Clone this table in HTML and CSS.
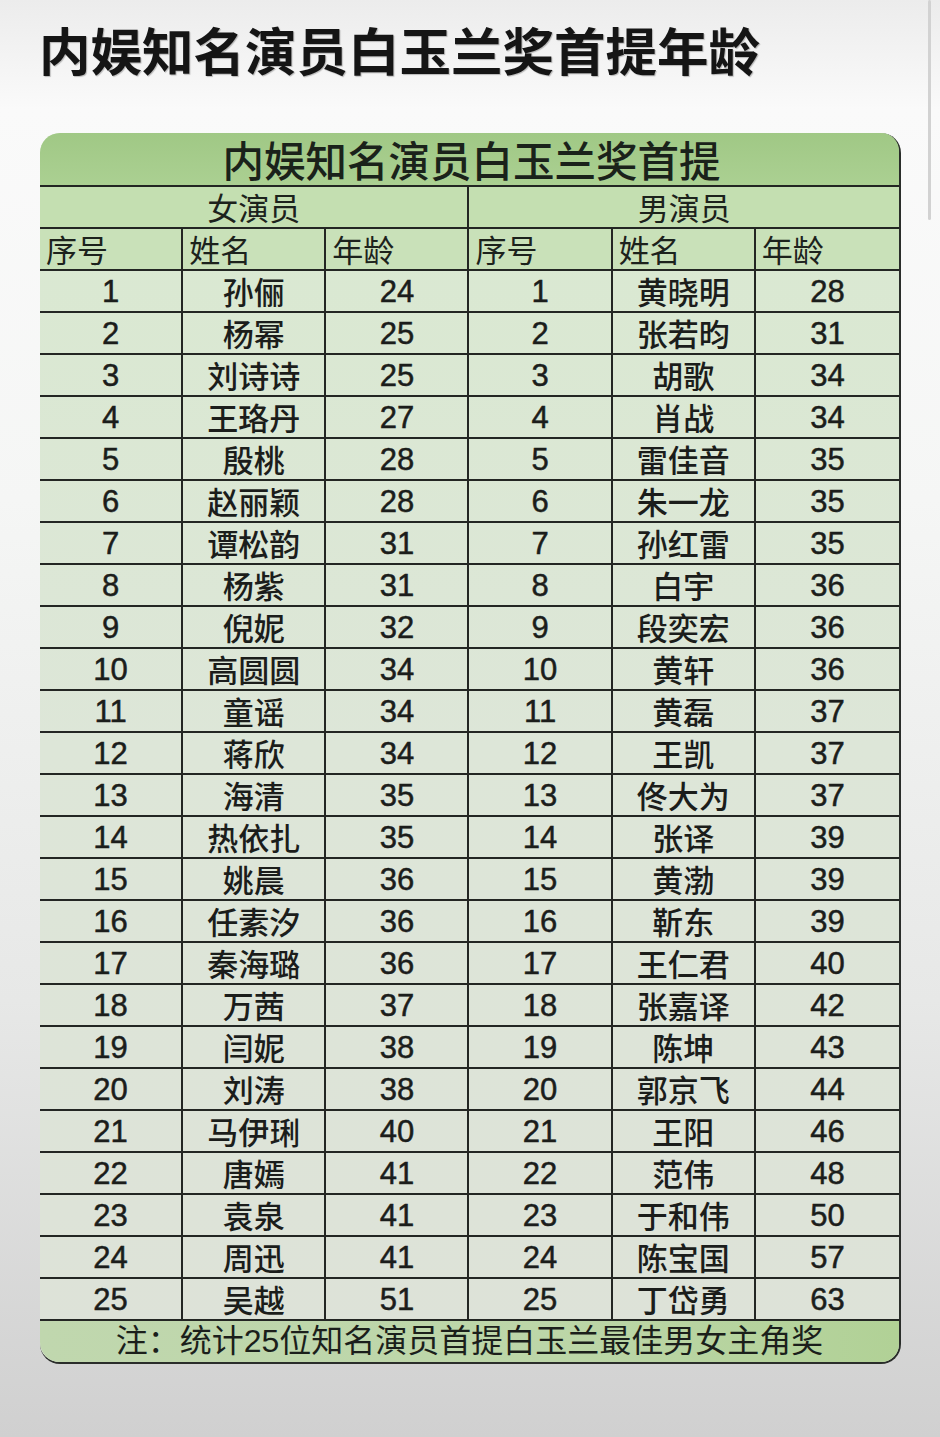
FILE: index.html
```html
<!DOCTYPE html>
<html lang="zh-CN">
<head>
<meta charset="utf-8">
<title>内娱知名演员白玉兰奖首提年龄</title>
<link rel="stylesheet" href="styles.css">
</head>
<body>
<div class="page">
  <h1 class="headline">内娱知名演员白玉兰奖首提年龄</h1>
  <div class="sheet">
    <table class="grid">
      <colgroup>
        <col class="c"><col class="c"><col class="c"><col class="c"><col class="c"><col class="c">
      </colgroup>
      <thead>
        <tr class="r-title"><th colspan="6">内娱知名演员白玉兰奖首提</th></tr>
        <tr class="r-group"><th colspan="3" class="vl">女演员</th><th colspan="3">男演员</th></tr>
        <tr class="r-head"><th class="vl">序号</th><th class="vl">姓名</th><th class="vl">年龄</th><th class="vl">序号</th><th class="vl">姓名</th><th>年龄</th></tr>
      </thead>
      <tbody id="rows">
<tr><td>1</td><td class="nm">孙俪</td><td>24</td><td>1</td><td class="nm">黄晓明</td><td>28</td></tr>
<tr><td>2</td><td class="nm">杨幂</td><td>25</td><td>2</td><td class="nm">张若昀</td><td>31</td></tr>
<tr><td>3</td><td class="nm">刘诗诗</td><td>25</td><td>3</td><td class="nm">胡歌</td><td>34</td></tr>
<tr><td>4</td><td class="nm">王珞丹</td><td>27</td><td>4</td><td class="nm">肖战</td><td>34</td></tr>
<tr><td>5</td><td class="nm">殷桃</td><td>28</td><td>5</td><td class="nm">雷佳音</td><td>35</td></tr>
<tr><td>6</td><td class="nm">赵丽颖</td><td>28</td><td>6</td><td class="nm">朱一龙</td><td>35</td></tr>
<tr><td>7</td><td class="nm">谭松韵</td><td>31</td><td>7</td><td class="nm">孙红雷</td><td>35</td></tr>
<tr><td>8</td><td class="nm">杨紫</td><td>31</td><td>8</td><td class="nm">白宇</td><td>36</td></tr>
<tr><td>9</td><td class="nm">倪妮</td><td>32</td><td>9</td><td class="nm">段奕宏</td><td>36</td></tr>
<tr><td>10</td><td class="nm">高圆圆</td><td>34</td><td>10</td><td class="nm">黄轩</td><td>36</td></tr>
<tr><td>11</td><td class="nm">童谣</td><td>34</td><td>11</td><td class="nm">黄磊</td><td>37</td></tr>
<tr><td>12</td><td class="nm">蒋欣</td><td>34</td><td>12</td><td class="nm">王凯</td><td>37</td></tr>
<tr><td>13</td><td class="nm">海清</td><td>35</td><td>13</td><td class="nm">佟大为</td><td>37</td></tr>
<tr><td>14</td><td class="nm">热依扎</td><td>35</td><td>14</td><td class="nm">张译</td><td>39</td></tr>
<tr><td>15</td><td class="nm">姚晨</td><td>36</td><td>15</td><td class="nm">黄渤</td><td>39</td></tr>
<tr><td>16</td><td class="nm">任素汐</td><td>36</td><td>16</td><td class="nm">靳东</td><td>39</td></tr>
<tr><td>17</td><td class="nm">秦海璐</td><td>36</td><td>17</td><td class="nm">王仁君</td><td>40</td></tr>
<tr><td>18</td><td class="nm">万茜</td><td>37</td><td>18</td><td class="nm">张嘉译</td><td>42</td></tr>
<tr><td>19</td><td class="nm">闫妮</td><td>38</td><td>19</td><td class="nm">陈坤</td><td>43</td></tr>
<tr><td>20</td><td class="nm">刘涛</td><td>38</td><td>20</td><td class="nm">郭京飞</td><td>44</td></tr>
<tr><td>21</td><td class="nm">马伊琍</td><td>40</td><td>21</td><td class="nm">王阳</td><td>46</td></tr>
<tr><td>22</td><td class="nm">唐嫣</td><td>41</td><td>22</td><td class="nm">范伟</td><td>48</td></tr>
<tr><td>23</td><td class="nm">袁泉</td><td>41</td><td>23</td><td class="nm">于和伟</td><td>50</td></tr>
<tr><td>24</td><td class="nm">周迅</td><td>41</td><td>24</td><td class="nm">陈宝国</td><td>57</td></tr>
<tr><td>25</td><td class="nm">吴越</td><td>51</td><td>25</td><td class="nm">丁岱勇</td><td>63</td></tr>
      </tbody>
      <tfoot>
        <tr class="r-note"><td colspan="6">注：统计25位知名演员首提白玉兰最佳男女主角奖</td></tr>
      </tfoot>
    </table>
  </div>
  <div class="scroll-ind"></div>
</div>
</body>
</html>
```

FILE: styles.css
```css
html, body {
  margin: 0;
  padding: 0;
}
body {
  width: 940px;
  min-height: 1437px;
  background: linear-gradient(180deg, #ececec 0px, #fafafa 110px, #f5f6f5 500px, #e7e8e7 1000px, #d0d0d0 1437px);
  font-family: "Liberation Sans", "Noto Sans CJK SC", sans-serif;
  color: #1b1d1b;
}
.page {
  position: relative;
  width: 940px;
  height: 1437px;
  padding-top: 18px;
  box-sizing: border-box;
}
.headline {
  margin: 0 0 0 39px;
  font-family: "Noto Sans CJK SC", sans-serif;
  font-weight: 700;
  font-size: 51.5px;
  line-height: 62px;
  color: #151515;
  letter-spacing: 0;
  text-shadow: 1px 1px 1px rgba(0,0,0,0.25);
}
.sheet {
  margin: 53px 0 0 40px;
  width: 861px;
  border-radius: 20px;
  border-right: 2px solid #2a2d2a;
  border-bottom: 2px solid #2a2d2a;
  box-sizing: border-box;
  background: linear-gradient(180deg, #d9e9d0 0%, #dde6d8 50%, #dde2d8 100%);
}
.grid {
  width: 100%;
  border-collapse: separate;
  border-spacing: 0;
  table-layout: fixed;
}
.grid .c {
  width: 16.66%;
}
.grid th, .grid td {
  padding: 0;
  text-align: center;
  white-space: nowrap;
  vertical-align: middle;
}
.r-title th {
  height: 52px;
  background: linear-gradient(180deg, #a0c885 0%, #abd092 100%);
  border-bottom: 2px solid #232623;
  border-radius: 20px 18px 0 0;
  font-family: "Noto Sans CJK SC", sans-serif;
  font-weight: 500;
  font-size: 41.5px;
  line-height: 52px;
  color: #1a221a;
  padding-left: 4px;
}
.r-group th {
  height: 40px;
  background: #c4dfb1;
  border-bottom: 2px solid #232623;
  font-family: "Noto Sans CJK SC", sans-serif;
  font-weight: 400;
  font-size: 31px;
  line-height: 40px;
  color: #1c221c;
}
.r-head th {
  height: 40px;
  background: #c9e1b9;
  border-bottom: 2px solid #232623;
  font-family: "Noto Sans CJK SC", sans-serif;
  font-weight: 400;
  font-size: 31px;
  line-height: 40px;
  text-align: left;
  padding-left: 6px;
  color: #1c221c;
}
.vl {
  border-right: 2px solid #232623;
}
#rows td {
  height: 38px;
  padding-top: 2px;
  border-bottom: 2px solid #232623;
  border-right: 2px solid #232623;
  font-size: 31px;
  line-height: 38px;
  color: #1b1d1b;
  -webkit-text-stroke: 0.5px #1b1d1b;
}
#rows td.nm {
  height: 40px;
  padding-top: 0;
  font-family: "Noto Sans CJK SC", sans-serif;
  font-weight: 500;
  font-size: 31px;
  line-height: 40px;
  -webkit-text-stroke: 0;
}
#rows td:last-child {
  border-right: none;
}
.r-note td {
  height: 41px;
  background: linear-gradient(90deg, #c0d7ae 0%, #bcd6a8 60%, #b1d196 100%);
  border-radius: 0 0 18px 20px;
  font-family: "Liberation Sans", "Noto Sans CJK SC", sans-serif;
  font-size: 32px;
  line-height: 41px;
  color: #1b1f1b;
}
.scroll-ind {
  position: absolute;
  left: 928px;
  top: 0;
  width: 3px;
  height: 220px;
  background: #d2d2d2;
  border-radius: 2px;
}
```
